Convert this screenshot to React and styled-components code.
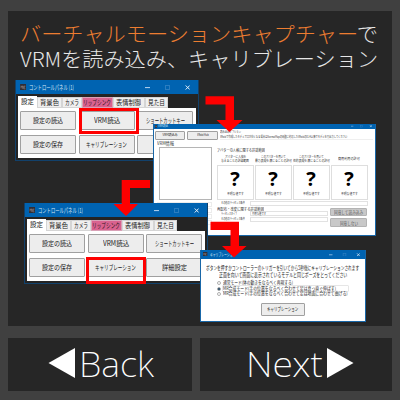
import React, { useLayoutEffect, useRef } from "react";
import styled, { createGlobalStyle, css } from "styled-components";

const Global = createGlobalStyle`
  * { box-sizing: border-box; }
  body { margin: 0; background: #404040; font-family: "Noto Sans CJK JP", sans-serif; }
`;

const Screen = styled.main`
  width: 400px;
  height: 400px;
  overflow: hidden;
  padding: 11px 8px;
  display: flex;
  flex-direction: column;
  gap: 12px;
  background: #404040;
`;

const Slide = styled.section`
  position: relative;
  height: 315px;
  flex: none;
  background: #262626;
`;

const Heading = styled.h1`
  margin: 0;
  padding: 9.5px 0 0 12px;
  display: flex;
  flex-direction: column;
  font-weight: 300;
  color: #e6e6e6;
`;

const Accent = styled.span`
  color: #ed7d31;
`;

const FitBox = styled.span`
  display: block;
  flex: none;
  width: ${(p) => p.$w}px;
  height: ${(p) => p.$h}px;
  line-height: ${(p) => p.$h}px;
  font-size: ${(p) => p.$size}px;
  font-family: ${(p) => p.$font || "inherit"};
  white-space: nowrap;
`;

const FitInner = styled.span`
  display: inline-block;
  vertical-align: top;
  transform-origin: 0 50%;
`;

// Condenses or widens a line of text so that it spans exactly w pixels.
function Fit({ w, h, size, font, className, children }) {
  const ref = useRef(null);
  useLayoutEffect(() => {
    const el = ref.current;
    el.style.transform = `scaleX(${w / el.offsetWidth})`;
  }, [w, children]);
  return (
    <FitBox className={className} $w={w} $h={h} $size={size} $font={font}>
      <FitInner ref={ref}>{children}</FitInner>
    </FitBox>
  );
}

const Win = styled.article`
  position: absolute;
  left: ${(p) => p.$x}px;
  top: ${(p) => p.$y}px;
  width: ${(p) => p.$w}px;
  height: ${(p) => p.$h}px;
  display: flex;
  flex-direction: column;
  border: 1px solid ${(p) => (p.$dark ? "#12416b" : "#1967a8")};
  border-top: 0;
  background: ${(p) => (p.$dark ? "#242424" : "#fff")};
  overflow: hidden;
`;

const TitleBar = styled.header`
  flex: none;
  height: ${(p) => p.$h}px;
  margin: 0 -1px;
  padding: 0 ${(p) => p.$h * 0.62}px 0 ${(p) => p.$h * 0.36}px;
  display: flex;
  align-items: center;
  gap: ${(p) => p.$h * 0.2}px;
  background: #0063b1;
  color: #d3e5f5;
`;

const Controls = styled.svg`
  margin-left: auto;
  fill: none;
  stroke: #b8d6f0;
`;

function Bar({ h, w, size, title, controls }) {
  const icon = h * 0.46;
  return (
    <TitleBar $h={h}>
      <svg width={icon} height={icon} viewBox="0 0 12 12">
        <rect width="12" height="12" rx="1" fill="#302d35" />
        <path d="M2 3v5M2 5h3M5 3v6M7 4h3M7 6h2M7 9h3M7 4v5" stroke="#a89c98" strokeWidth="1" fill="none" />
      </svg>
      <Fit w={w} h={h} size={size}>{title}</Fit>
      <Controls width={controls} height={controls / 9} viewBox="0 0 45 5">
        <path d="M0 2.6h5" />
        <rect x="20.5" y=".5" width="4" height="4" stroke="#2b7dc0" />
        <path d="M40.7 .5l4 4m0 -4l-4 4" stroke="#e5f1fb" />
      </Controls>
    </TitleBar>
  );
}

const Tabs = styled.nav`
  display: flex;
  align-items: flex-end;
  height: 13.5px;
  flex: none;
  padding-left: 2px;
`;

const Tab = styled.span`
  display: flex;
  justify-content: center;
  align-items: center;
  width: ${(p) => p.$w}px;
  height: 10.5px;
  color: #222;
  background: #efefef;
  border: 0.5px solid #d5d5d5;
  ${(p) => p.$tone === "active" && css`height: 11.5px; background: #fff; border-color: #fff;`}
  ${(p) => p.$tone === "pink" && css`background: #d9628f; border-color: #d9a0b6; color: #301520;`}
`;

const Pane = styled.div`
  margin: 0 2px 2px;
  flex: none;
  height: 50px;
  padding: 3px 2px 0;
  display: grid;
  grid-template-columns: repeat(3, 56px);
  grid-auto-rows: 19px;
  column-gap: 2.5px;
  row-gap: 5px;
  background: #fff;
`;

const Button = styled.button`
  margin: 0;
  padding: 0;
  width: ${(p) => p.$w || 56}px;
  height: ${(p) => p.$h || 19}px;
  flex: none;
  display: flex;
  align-items: center;
  justify-content: center;
  font-family: inherit;
  color: ${(p) => (p.$off ? "#555" : "#222")};
  background: ${(p) => (p.$off ? "#c8c8c8" : "#ededed")};
  border: 1px solid ${(p) => (p.$off ? "#b3b3b3" : "#a0a0a0")};
  border-radius: 1px;
`;

const Highlight = styled.div`
  position: absolute;
  left: ${(p) => p.$x}px;
  top: ${(p) => p.$y}px;
  width: 60px;
  height: 26.5px;
  border: 3px solid #fe0000;
`;

const TABS = [
  ["設定", 19, 13, "active"],
  ["背景色", 25, 19],
  ["カメラ", 19.5, 14],
  ["リップシンク", 31, 28, "pink"],
  ["表情制御", 32, 25],
  ["見た目", 23, 17],
];

const ACTIONS = [
  ["設定の読込", 30],
  ["VRM読込", 26],
  ["ショートカットキー", 39],
  ["設定の保存", 30],
  ["キャリブレーション", 41],
  ["詳細設定", 25],
];

function ControlPanel({ x, y }) {
  return (
    <Win $x={x} $y={y} $w={184} $h={81} $dark>
      <Bar h={14} w={45} size={6.5} title="コントロールパネル (1)" controls={45} />
      <Tabs>
        {TABS.map(([label, w, tw, tone]) => (
          <Tab key={label} $w={w} $tone={tone}>
            <Fit w={tw} h={9} size={7}>{label}</Fit>
          </Tab>
        ))}
      </Tabs>
      <Pane>
        {ACTIONS.map(([label, w]) => (
          <Button key={label}>
            <Fit w={w} h={16} size={7}>{label}</Fit>
          </Button>
        ))}
      </Pane>
    </Win>
  );
}

const Toolbar = styled.div`
  display: flex;
  gap: 2px;
  flex: none;
  height: 12px;
  padding: 2px 1.5px 0;
  color: #333;
`;

const Notes = styled.div`
  margin-top: -1px;
  width: 153px;
  height: 10px;
  border-bottom: 1px solid #efefef;
`;

const Group = styled.div`
  display: flex;
  gap: 4.5px;
  flex: 1;
  margin: 0 2px 2px;
  padding-left: 1px;
  color: #333;
`;

const Preview = styled.div`
  width: 53px;
  height: 53px;
  margin: 0.5px 0 2px 2.5px;
  background: #fff;
  border: 1px solid #b5b5b5;
`;

const Ghost = styled.div`
  width: 55px;
  height: 5px;
  margin-bottom: 1px;
  border: 1px solid #ececec;
`;

const Permissions = styled.div`
  width: 154px;
  padding-top: 7px;
  display: flex;
  flex-direction: column;
`;

const Cards = styled.div`
  display: grid;
  grid-template-columns: repeat(4, 37px);
  column-gap: 1px;
`;

const CardHead = styled.div`
  height: 12px;
  display: flex;
  flex-direction: column;
  align-items: center;
  justify-content: center;
`;

const Card = styled.div`
  height: 35px;
  border: 1px solid #dedede;
  display: flex;
  flex-direction: column;
  align-items: center;
  padding-top: 1px;
`;

const Mark = styled.span`
  height: 23px;
  font: 700 20px/23px "Open Sans", "Noto Sans", sans-serif;
  color: #000;
`;

const Fields = styled.div`
  display: grid;
  grid-template-columns: 33px 78px 37px;
  align-items: center;
  grid-template-rows: 6px 5px 5px 5.5px;
`;

const Field = styled.div`
  height: 5px;
  border: 1px solid #e2e2e2;
  padding-left: 1.5px;
  display: flex;
  align-items: center;
  ${(p) => p.$wide && css`grid-column: 2 / 4; width: 118px;`}
`;

const FieldTitle = styled.div`
  grid-column: 1 / 4;
`;

const FieldRow = styled.div`
  padding-left: 4px;
`;

const Choices = styled.div`
  position: absolute;
  right: 7.5px;
  bottom: 8px;
  display: flex;
  flex-direction: column;
  gap: 2px;
`;

const CARDS = [
  [["アバターに人格を", 21], ["与えることの許諾範囲", 28]],
  [["このアバターを用いて", 25], ["暴力表現を演じることの許可", 37]],
  [["このアバターを用いて", 25], ["性的表現を演じることの許可", 37]],
  [["商用利用の許可", 22]],
];

function VrmWindow() {
  return (
    <Win $x={144.5} $y={112.5} $w={223} $h={112}>
      <Bar h={5.8} w={10} size={3} title="VRM読込" controls={21} />
      <Toolbar>
        <Button $w={30} $h={9}><Fit w={15} h={7} size={3}>VRM読込み</Fit></Button>
        <Button $w={31} $h={9}><Fit w={12} h={7} size={3}>VRoid Hub</Fit></Button>
        <Notes>
          <Fit w={21} h={4.5} size={3}>読み込みオプション</Fit>
          <Fit w={127} h={4.5} size={3}>VRoidで作成したモデルで口が白くなる場合はNormalMapの問題に対応したVRoidの0.14以降でモデルを再出力してください</Fit>
        </Notes>
      </Toolbar>
      <Group>
        <div>
          <Fit w={17} h={5.5} size={4.5}>VRM情報</Fit>
          <Preview />
          <Ghost /><Ghost /><Ghost /><Ghost />
        </div>
        <Permissions>
          <Fit w={48} h={5} size={4}>アバターの人格に関する許諾範囲</Fit>
          <Cards>
            {CARDS.map((lines, i) => (
              <CardHead key={i}>
                {lines.map(([text, w]) => <Fit key={text} w={w} h={4.4} size={3.7}>{text}</Fit>)}
              </CardHead>
            ))}
            {CARDS.map((_, i) => (
              <Card key={i}>
                <Mark>?</Mark>
                <Fit w={17} h={8} size={3.8}>不明な値です</Fit>
              </Card>
            ))}
          </Cards>
          <Fields>
            <FieldRow><Fit w={24} h={4} size={3}>その他のライセンス条件</Fit></FieldRow>
            <Field $wide />
            <FieldTitle><Fit w={47} h={4.5} size={4}>再配布・改変に関する許諾範囲</Fit></FieldTitle>
            <FieldRow><Fit w={16} h={4} size={3}>ライセンスタイプ</Fit></FieldRow>
            <Field><Fit w={14} h={3.5} size={3.2}>不明な値です</Fit></Field>
            <span />
            <FieldRow><Fit w={24} h={4} size={3}>その他のライセンス条件</Fit></FieldRow>
            <Field />
          </Fields>
        </Permissions>
      </Group>
      <Choices>
        <Button $w={37} $h={8.5} $off><Fit w={29} h={7} size={4.8}>同意して読み込み</Fit></Button>
        <Button $w={37} $h={8.5} $off><Fit w={18} h={7} size={4.8}>同意しない</Fit></Button>
      </Choices>
    </Win>
  );
}

const CalBody = styled.div`
  display: flex;
  flex-direction: column;
  align-items: center;
  padding-top: 5.5px;
  color: #222;
`;

const Options = styled.div`
  display: flex;
  flex-direction: column;
  width: 131px;
  margin: 1.5px 0 5.5px;
`;

const Option = styled.label`
  display: flex;
  align-items: center;
  gap: 1.5px;
  height: 5.7px;
`;

const Radio = styled.span`
  width: 4px;
  height: 4px;
  border: 1px solid #b0b0b0;
  border-radius: 50%;
  background: ${(p) => (p.$on ? "#123a5c" : "#fff")};
`;

const Frame = styled.span`
  width: 125px;
  height: 5.5px;
  box-shadow: ${(p) => (p.$on ? "0 0 0 0.5px #ccc" : "none")};
`;

function CalibrationWindow() {
  return (
    <Win $x={192} $y={238.5} $w={165.5} $h={72.5}>
      <Bar h={9.5} w={25} size={4.6} title="キャリブレーション" controls={31} />
      <CalBody>
        <Fit w={153} h={7} size={5.5}>ボタンを押すかコントローラーのトリガーを引いてから5秒後にキャリブレーションされます</Fit>
        <Fit w={128} h={7} size={5.5}>正面を向いて画面に表示されているモデルと同じポーズをとってください</Fit>
        <Options>
          <Option><Radio /><Frame><Fit w={70} h={5.5} size={4.5}>通常モード(体の動きをなるべく再現する)</Fit></Frame></Option>
          <Option><Radio $on /><Frame $on><Fit w={113} h={5.5} size={4.5}>MR合成モード(手の位置をなるべく合わせて足は真っ直ぐ伸ばす)</Fit></Frame></Option>
          <Option><Radio /><Frame><Fit w={125} h={5.5} size={4.5}>MR合成モード(手の位置をなるべく合わせて足は地面に合わせて曲げる)</Fit></Frame></Option>
        </Options>
        <Button $w={44} $h={13}><Fit w={31} h={10} size={5.4}>キャリブレーション</Fit></Button>
      </CalBody>
    </Win>
  );
}

const Arrows = styled.svg`
  position: absolute;
  left: 0;
  top: 0;
  fill: #fe0000;
`;

const Footer = styled.footer`
  display: grid;
  grid-template-columns: 184px 192px;
  gap: 8px;
  height: 51px;
`;

const NavButton = styled.button`
  margin: 0;
  border: 0;
  padding: ${(p) => (p.$next ? "0 38px 0 43px" : "0 39px 0 40px")};
  display: flex;
  align-items: center;
  justify-content: space-between;
  background: #262626;
  color: #fff;
  font-family: inherit;
  font-weight: 200;
`;

const Triangle = styled.svg`
  fill: #fff;
  flex: none;
  margin-bottom: 3px;
`;

const NavLabel = styled(Fit)`
  margin-bottom: 2px;
`;

const LATIN = '"Noto Sans", sans-serif';

export default function App() {
  return (
    <Screen>
      <Global />
      <Slide>
        <Heading>
          <Fit w={358} h={25.5} size={20.6}><Accent>バーチャルモーションキャプチャー</Accent>で</Fit>
          <Fit w={358.5} h={25.5} size={20.6}>VRMを読み込み、キャリブレーション</Fit>
        </Heading>
        <ControlPanel x={7} y={69} />
        <Highlight $x={70.5} $y={96.5} />
        <VrmWindow />
        <ControlPanel x={16} y={192} />
        <Highlight $x={78} $y={246} />
        <CalibrationWindow />
        <Arrows width="384" height="315" viewBox="8 11 384 315">
          <path d="M205.5 96.3H234V120H242.5L229.5 132L216.5 120H225.5V104.5H205.5Z" />
          <path d="M150 180H121.7V204H113.5L126 216L138 204H130V188H150Z" />
          <path d="M210.5 221.8H239V246H246.5L234 257.5L222 246H230.5V230H210.5Z" />
        </Arrows>
      </Slide>
      <Footer>
        <NavButton>
          <Triangle width="27" height="30" viewBox="0 0 27 30"><path d="M0.5 15L27 0V30Z" /></Triangle>
          <NavLabel w={75} h={51} size={35} font={LATIN}>Back</NavLabel>
        </NavButton>
        <NavButton $next>
          <NavLabel w={77} h={51} size={35} font={LATIN}>Next</NavLabel>
          <Triangle width="27" height="30" viewBox="0 0 27 30"><path d="M26.5 15L0 0V30Z" /></Triangle>
        </NavButton>
      </Footer>
    </Screen>
  );
}
